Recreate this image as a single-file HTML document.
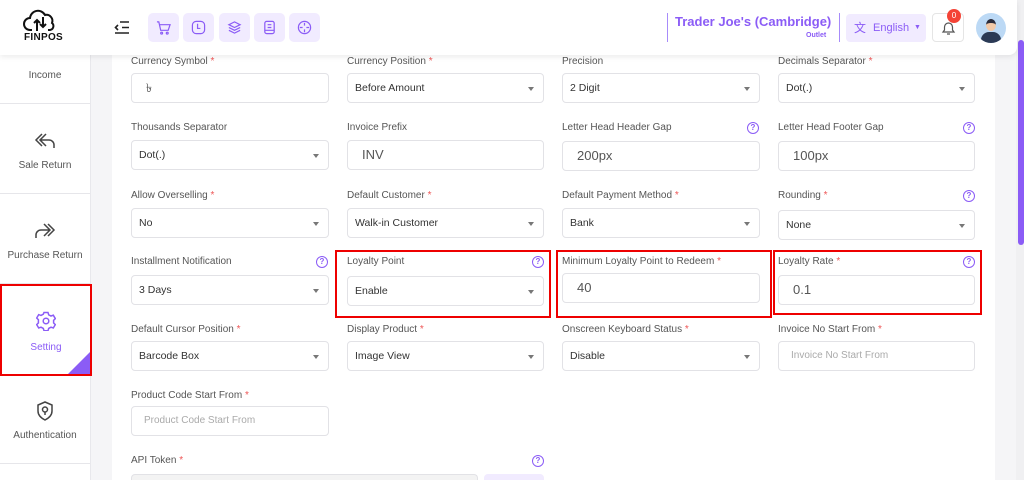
<!DOCTYPE html>
<html style="width:1024px;height:480px;overflow:hidden"><head><meta charset="utf-8"><style>
*{box-sizing:border-box;margin:0;padding:0}
body{width:1024px;height:480px;overflow:hidden;background:#f5f5f7;font-family:"Liberation Sans",sans-serif;position:relative;color:#444}
.side{position:absolute;left:0;top:0;width:91px;height:480px;background:#fff;border-right:1px solid #e8e8ec}
.si{position:absolute;left:0;width:90px;text-align:center;font-size:10px;color:#555;border-bottom:1px solid #e6e6ea}
.panel{position:absolute;left:112px;top:40px;width:883px;height:440px;background:#fff}
.hdr{position:absolute;left:0;top:0;width:1017px;height:55px;background:#fff;border-radius:0 0 8px 0;box-shadow:0 2px 6px rgba(0,0,0,.08)}
.lb{position:absolute;font-size:10px;color:#555;white-space:nowrap}
.lb i{color:#e55;font-style:normal}
.f{position:absolute;height:30px;border:1px solid #e2e2e6;border-radius:4px;background:#fff;font-size:10.5px;color:#333;padding-left:7px;line-height:28px}
.f.in{font-size:13px;padding-left:14px;color:#555}
.f.ph{color:#aaa;font-size:10px;padding-left:12px}
.f.s::after{content:"";position:absolute;right:9px;top:13px;border-left:3.5px solid transparent;border-right:3.5px solid transparent;border-top:4px solid #777}
.q{position:absolute;width:12px;height:12px;border:1.5px solid #8b5cf6;border-radius:50%;font-size:8px;color:#8b5cf6;text-align:center;line-height:9px;font-weight:bold}
.red{position:absolute;border:2px solid #e00}
.ib{position:absolute;top:13px;width:31px;height:29px;background:#f1ebff;border-radius:5px}
</style></head><body>
<div class="side">
<div class="si" style="top:0;height:104px;padding-top:70px">Income</div>
<div class="si" style="top:104px;height:90px;padding-top:56px">
<svg style="position:absolute;left:34px;top:28px" width="22" height="18" viewBox="0 0 22 18" fill="none" stroke="#444" stroke-width="1.5"><path d="M8 2L2 8l6 6M12 2L6 8l6 6M7 8h8a5 5 0 015 5v3"/></svg>Sale Return</div>
<div class="si" style="top:194px;height:90px;padding-top:56px">
<svg style="position:absolute;left:34px;top:28px" width="22" height="18" viewBox="0 0 22 18" fill="none" stroke="#444" stroke-width="1.5"><path d="M14 2l6 6-6 6M10 2l6 6-6 6M15 8H7a5 5 0 00-5 5v3"/></svg>Purchase Return</div>
<div class="si" style="top:374px;height:90px;padding-top:56px">
<svg style="position:absolute;left:36px;top:27px" width="18" height="20" viewBox="0 0 18 20" fill="none" stroke="#444" stroke-width="1.5"><path d="M9 1l7 3v6c0 4-3 7-7 9-4-2-7-5-7-9V4z"/><circle cx="9" cy="8.5" r="2.5"/><path d="M9 11v3"/></svg>Authentication</div>
</div>
<div style="position:absolute;left:0;top:284px;width:92px;height:92px;border:2px solid #e00;background:#fff;text-align:center;color:#8b5cf6;font-size:10px;padding-top:56px">
<svg style="position:absolute;left:34px;top:25px" width="20" height="20" viewBox="0 0 20 20" fill="none" stroke="#8b5cf6" stroke-width="1.5"><path d="M8 1.5h4l.7 2.3 2.3 1.2 2.3-.8 2 3.4-1.7 1.7v2.6l1.7 1.7-2 3.4-2.3-.8-2.3 1.2-.7 2.3H8l-.7-2.3-2.3-1.2-2.3.8-2-3.4 1.7-1.7V8.7L.7 7l2-3.4 2.3.8L7.3 3.2z"/><circle cx="10" cy="10" r="2.8"/></svg>Setting
<div style="position:absolute;right:0;bottom:0;width:0;height:0;border-left:22px solid transparent;border-bottom:22px solid #8b5cf6"></div></div>

<div class="panel"></div>
<div style="position:absolute;left:1016px;top:0;width:8px;height:480px;background:#f0f0f2"></div>
<div style="position:absolute;left:1018px;top:40px;width:6px;height:205px;background:#8b5cf6;border-radius:3px"></div>

<div class="lb" style="left:131px;top:56px">Currency Symbol <i>*</i></div>
<div class="f in" style="left:131px;top:73px;width:198px;font-size:12px">৳</div>
<div class="lb" style="left:347px;top:56px">Currency Position <i>*</i></div>
<div class="f s" style="left:347px;top:73px;width:197px">Before Amount</div>
<div class="lb" style="left:562px;top:56px">Precision</div>
<div class="f s" style="left:562px;top:73px;width:198px">2 Digit</div>
<div class="lb" style="left:778px;top:56px">Decimals Separator <i>*</i></div>
<div class="f s" style="left:778px;top:73px;width:197px">Dot(.)</div>

<div class="lb" style="left:131px;top:122px">Thousands Separator</div>
<div class="f s" style="left:131px;top:140px;width:198px">Dot(.)</div>
<div class="lb" style="left:347px;top:122px">Invoice Prefix</div>
<div class="f in" style="left:347px;top:140px;width:197px">INV</div>
<div class="lb" style="left:562px;top:122px">Letter Head Header Gap</div><div class="q" style="left:747px;top:122px">?</div>
<div class="f in" style="left:562px;top:141px;width:198px">200px</div>
<div class="lb" style="left:778px;top:122px">Letter Head Footer Gap</div><div class="q" style="left:963px;top:122px">?</div>
<div class="f in" style="left:778px;top:141px;width:197px">100px</div>

<div class="lb" style="left:131px;top:190px">Allow Overselling <i>*</i></div>
<div class="f s" style="left:131px;top:208px;width:198px">No</div>
<div class="lb" style="left:347px;top:190px">Default Customer <i>*</i></div>
<div class="f s" style="left:347px;top:208px;width:197px">Walk-in Customer</div>
<div class="lb" style="left:562px;top:190px">Default Payment Method <i>*</i></div>
<div class="f s" style="left:562px;top:208px;width:198px">Bank</div>
<div class="lb" style="left:778px;top:190px">Rounding <i>*</i></div><div class="q" style="left:963px;top:190px">?</div>
<div class="f s" style="left:778px;top:210px;width:197px">None</div>

<div class="lb" style="left:131px;top:256px">Installment Notification</div><div class="q" style="left:316px;top:256px">?</div>
<div class="f s" style="left:131px;top:275px;width:198px">3 Days</div>
<div class="lb" style="left:347px;top:256px">Loyalty Point</div><div class="q" style="left:532px;top:256px">?</div>
<div class="f s" style="left:347px;top:276px;width:197px">Enable</div>
<div class="lb" style="left:562px;top:256px">Minimum Loyalty Point to Redeem <i>*</i></div>
<div class="f in" style="left:562px;top:273px;width:198px">40</div>
<div class="lb" style="left:778px;top:256px">Loyalty Rate <i>*</i></div><div class="q" style="left:963px;top:256px">?</div>
<div class="f in" style="left:778px;top:275px;width:197px">0.1</div>
<div class="red" style="left:335px;top:250px;width:216px;height:68px"></div>
<div class="red" style="left:556px;top:250px;width:216px;height:68px"></div>
<div class="red" style="left:773px;top:250px;width:209px;height:65px"></div>

<div class="lb" style="left:131px;top:324px">Default Cursor Position <i>*</i></div>
<div class="f s" style="left:131px;top:341px;width:198px">Barcode Box</div>
<div class="lb" style="left:347px;top:324px">Display Product <i>*</i></div>
<div class="f s" style="left:347px;top:341px;width:197px">Image View</div>
<div class="lb" style="left:562px;top:324px">Onscreen Keyboard Status <i>*</i></div>
<div class="f s" style="left:562px;top:341px;width:198px">Disable</div>
<div class="lb" style="left:778px;top:324px">Invoice No Start From <i>*</i></div>
<div class="f ph" style="left:778px;top:341px;width:197px">Invoice No Start From</div>

<div class="lb" style="left:131px;top:390px">Product Code Start From <i>*</i></div>
<div class="f ph" style="left:131px;top:406px;width:198px">Product Code Start From</div>
<div class="lb" style="left:131px;top:455px">API Token <i>*</i></div><div class="q" style="left:532px;top:455px">?</div>
<div class="f" style="left:131px;top:474px;width:347px;height:6px;background:#f3f3f3;border-bottom:none;border-radius:4px 4px 0 0"></div>
<div class="f" style="left:484px;top:474px;width:60px;height:6px;background:#f1ebff;border-color:#f1ebff;border-radius:4px 4px 0 0"></div>

<div class="hdr">
<svg style="position:absolute;left:23px;top:9px" width="36" height="24" viewBox="0 0 36 24" fill="none" stroke="#111" stroke-width="2"><path d="M9 21H7a6 6 0 010-12 8 8 0 0115-3 6 6 0 017 8 4 4 0 01-2 7h-2"/><path d="M14 22V11M11 14l3-3 3 3M20 8v10M17 15l3 3 3-3"/></svg>
<div style="position:absolute;left:24px;top:32px;font-size:10px;font-weight:bold;color:#111;letter-spacing:.3px">FINPOS</div>
<svg style="position:absolute;left:114px;top:21px" width="16" height="13" viewBox="0 0 16 13" stroke="#222" stroke-width="1.6" fill="none"><path d="M6 1h9M8 6.5h7M1 12h14M4 4L1.5 6.5 4 9"/></svg>
<div class="ib" style="left:148px"><svg style="margin:7px 8px" width="15" height="15" viewBox="0 0 16 16" fill="none" stroke="#8b5cf6" stroke-width="1.3"><path d="M1 2h2l2 9h8l2-6H4"/><circle cx="6" cy="14" r="1"/><circle cx="12" cy="14" r="1"/></svg></div>
<div class="ib" style="left:183px"><svg style="margin:7px 8px" width="15" height="15" viewBox="0 0 16 16" fill="none" stroke="#8b5cf6" stroke-width="1.3"><rect x="1.5" y="1.5" width="13" height="13" rx="4"/><path d="M7 4v5h3"/></svg></div>
<div class="ib" style="left:219px"><svg style="margin:7px 8px" width="15" height="15" viewBox="0 0 16 16" fill="none" stroke="#8b5cf6" stroke-width="1.3"><path d="M8 2l6 3-6 3-6-3zM2 8l6 3 6-3M2 11l6 3 6-3"/></svg></div>
<div class="ib" style="left:254px"><svg style="margin:7px 8px" width="15" height="15" viewBox="0 0 16 16" fill="none" stroke="#8b5cf6" stroke-width="1.3"><rect x="3" y="1.5" width="10" height="13" rx="2"/><path d="M6 5h4M6 8h4M3 11h10"/></svg></div>
<div class="ib" style="left:289px"><svg style="margin:7px 8px" width="15" height="15" viewBox="0 0 16 16" fill="none" stroke="#8b5cf6" stroke-width="1.3"><circle cx="8" cy="8" r="6.5"/><path d="M8 3v3M8 10v3M3 8h3M10 8h3"/></svg></div>
<div style="position:absolute;left:667px;top:13px;width:1px;height:29px;background:#a78bfa"></div>
<div style="position:absolute;left:675px;top:14px;font-size:13px;font-weight:bold;color:#8b5cf6">Trader Joe's (Cambridge)</div>
<div style="position:absolute;left:806px;top:32px;font-size:7px;font-weight:bold;color:#8b5cf6">Outlet</div>
<div style="position:absolute;left:839px;top:13px;width:1px;height:29px;background:#a78bfa"></div>
<div style="position:absolute;left:846px;top:14px;width:80px;height:28px;background:#f1ebff;border-radius:4px;color:#8b5cf6;font-size:11px;line-height:28px">
<span style="position:absolute;left:8px;top:0;font-size:12px">文</span>
<span style="position:absolute;left:27px;top:0">English</span>
<span style="position:absolute;left:68px;top:0;font-size:7px">▼</span></div>
<div style="position:absolute;left:932px;top:13px;width:32px;height:29px;border:1px solid #e5e5e5;border-radius:4px"><svg style="margin:6px 8px" width="15" height="16" viewBox="0 0 15 16" fill="none" stroke="#555" stroke-width="1.2"><path d="M2 12h11l-1.5-2V7a4 4 0 00-8 0v3zM6 14h3"/></svg></div>
<div style="position:absolute;left:947px;top:9px;width:14px;height:14px;border-radius:50%;background:#f44336;color:#fff;font-size:8px;text-align:center;line-height:14px">0</div>
<div style="position:absolute;left:976px;top:13px;width:30px;height:30px;border-radius:50%;background:#bcd9f5;overflow:hidden"><div style="position:absolute;left:10px;top:6px;width:10px;height:12px;border-radius:50%;background:#f2c9a8;border-top:4px solid #2a2a3a"></div><div style="position:absolute;left:5px;top:19px;width:20px;height:14px;border-radius:8px 8px 0 0;background:#2b3a55"></div></div>
</div>
</body></html>
